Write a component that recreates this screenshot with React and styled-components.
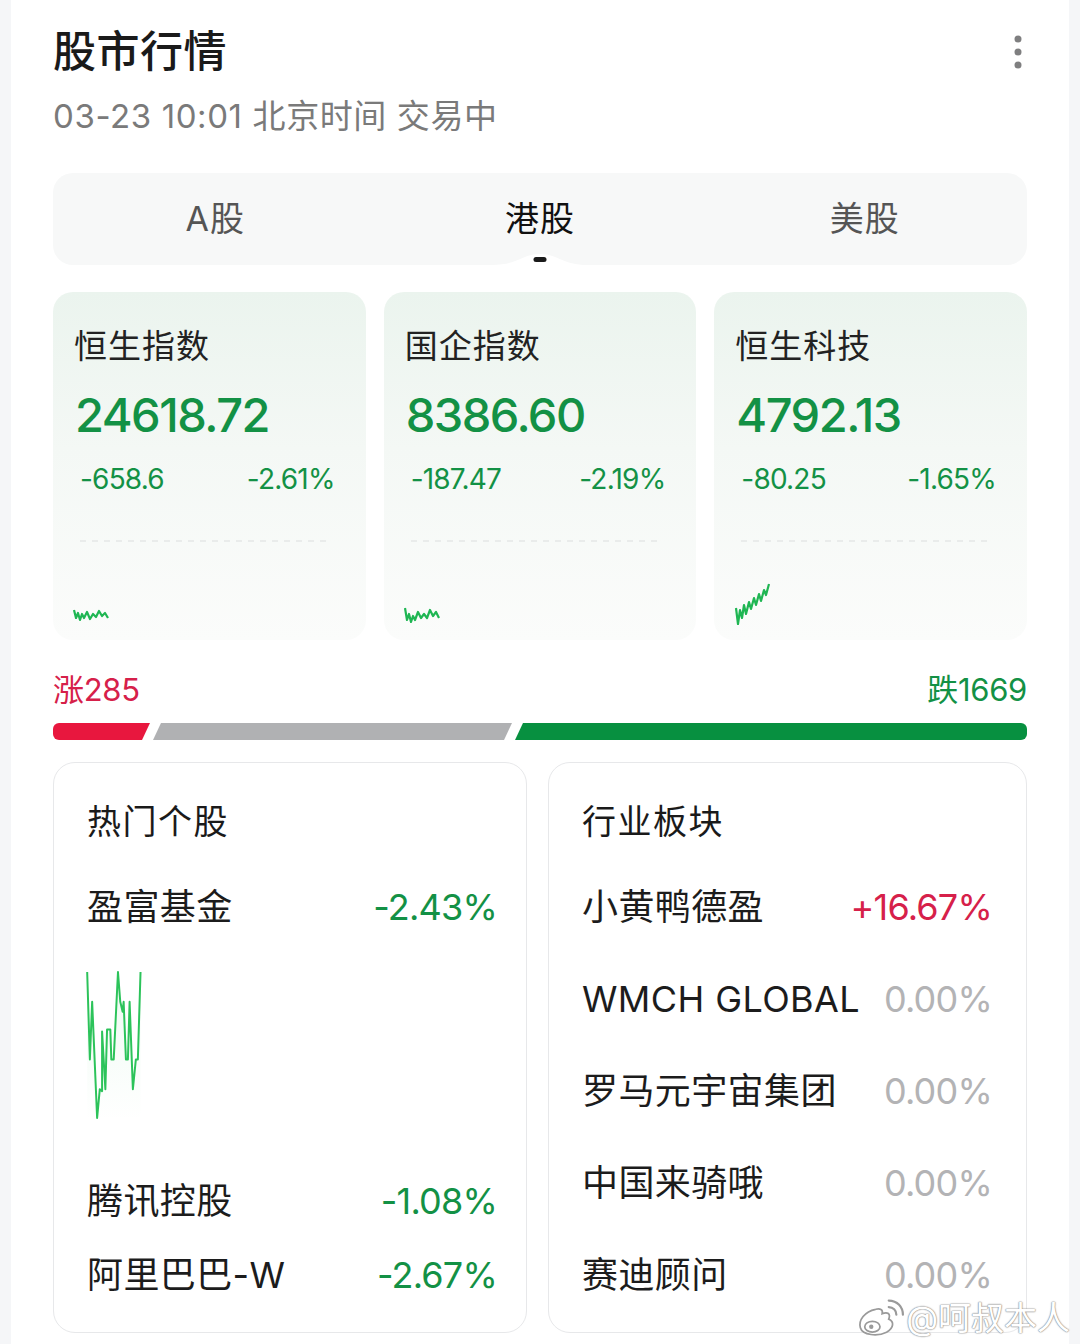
import React from 'react';
import styled, { createGlobalStyle } from 'styled-components';

const Global = createGlobalStyle`
  html, body { margin: 0; padding: 0; background: #f5f6f8; }
  body { font-family: Inter, "Noto Sans CJK SC", sans-serif; -webkit-font-smoothing: antialiased; }
`;

const GREEN = '#139145';
const RED = '#d6204a';
const GREY = '#b3b3b5';

const Page = styled.div`
  width: 1080px;
  height: 1344px;
  background: #f5f6f8;
  display: flex;
  justify-content: center;
  overflow: hidden;
  position: relative;
`;

const Panel = styled.main`
  width: 1058px;
  background: #ffffff;
  padding: 25px 42px 0;
  box-sizing: border-box;
  display: flex;
  flex-direction: column;
`;

const Header = styled.header`
  display: flex;
  justify-content: space-between;
  align-items: flex-start;
`;

const Title = styled.h1`
  margin: 0;
  font-size: 43px;
  line-height: 52px;
  font-weight: 500;
  color: #1a1a1a;
  letter-spacing: 0.5px;
`;

const Subtitle = styled.div`
  margin-top: 17px;
  font-size: 33px;
  line-height: 44px;
  color: #7a7a7a;
  letter-spacing: 0.6px;
`;

const MoreIcon = styled.svg`
  margin: 10px 4px 0 0;
  display: block;
`;

const TabBar = styled.nav`
  position: relative;
  margin-top: 35px;
  height: 92px;
  background: #f7f8f8;
  border-radius: 20px;
  display: grid;
  grid-template-columns: repeat(3, 1fr);
  align-items: center;
`;

const Tab = styled.div`
  text-align: center;
  font-size: 34px;
  line-height: 44px;
  color: ${p => (p.$active ? '#111111' : '#555555')};
  font-weight: 400;
  letter-spacing: 1px;
`;

const TabNotch = styled.svg`
  position: absolute;
  left: 50%;
  bottom: 0;
  transform: translateX(-50%);
  display: block;
`;

const IndexGrid = styled.section`
  margin-top: 27px;
  display: grid;
  grid-template-columns: repeat(3, 1fr);
  gap: 18px;
`;

const IndexCard = styled.div`
  height: 348px;
  box-sizing: border-box;
  border-radius: 20px;
  background: linear-gradient(180deg, #ebf4ee 0%, #f4f8f5 45%, #fbfcfb 100%);
  padding-top: 32px;
  display: flex;
  flex-direction: column;
`;

const IndexName = styled.div`
  padding-left: 21px;
  font-size: 33px;
  line-height: 44px;
  color: #222222;
  letter-spacing: 1px;
`;

const IndexValue = styled.div`
  margin-top: 19px;
  padding-left: 22px;
  font-size: 47px;
  line-height: 56px;
  font-weight: 500;
  color: ${GREEN};
  letter-spacing: -1.5px;
`;

const ChangeRow = styled.div`
  margin-top: 18px;
  padding: 0 31px 0 27px;
  display: flex;
  justify-content: space-between;
  font-size: 28px;
  line-height: 36px;
  color: ${GREEN};
  letter-spacing: -0.8px;
`;

const Chart = styled.svg`
  display: block;
  margin: 13px 0 0 20px;
`;

const BreadthRow = styled.div`
  margin-top: 30px;
  display: flex;
  justify-content: space-between;
  font-size: 31px;
  line-height: 40px;
  letter-spacing: -0.3px;
`;

const BreadthLabel = styled.span`
  color: ${p => p.$color};
`;

const Bar = styled.div`
  margin-top: 13px;
  height: 17px;
  display: flex;
`;

const Segment = styled.div`
  flex: ${p => p.$grow} 0 0;
  background: ${p => p.$color};
  margin-left: ${p => (p.$first ? '0' : '3px')};
  border-radius: ${p => (p.$first ? '6px 0 0 6px' : p.$last ? '0 6px 6px 0' : '0')};
  clip-path: ${p =>
    p.$first
      ? 'polygon(0 0, 100% 0, calc(100% - 8px) 100%, 0 100%)'
      : p.$last
      ? 'polygon(8px 0, 100% 0, 100% 100%, 0 100%)'
      : 'polygon(8px 0, 100% 0, calc(100% - 8px) 100%, 0 100%)'};
`;

const ListGrid = styled.section`
  margin-top: 22px;
  display: grid;
  grid-template-columns: 474px 1fr;
  gap: 21px;
`;

const ListCard = styled.div`
  height: 571px;
  box-sizing: border-box;
  border: 1.5px solid #e7e8ea;
  border-radius: 22px;
  background: #ffffff;
  padding: 36px ${p => p.$padRight}px 34px 33px;
  display: flex;
  flex-direction: column;
`;

const CardTitle = styled.div`
  font-size: 34px;
  line-height: 46px;
  color: #1a1a1a;
  font-weight: 400;
  letter-spacing: 1.5px;
`;

const Row = styled.div`
  margin-top: ${p => p.$mt}px;
  display: flex;
  justify-content: space-between;
  align-items: center;
  font-size: 36px;
  line-height: 46px;
`;

const RowName = styled.span`
  color: #1c1c1c;
  letter-spacing: 0.4px;
  white-space: nowrap;
`;

const RowValue = styled.span`
  color: ${p => p.$color};
  letter-spacing: -0.8px;
  white-space: nowrap;
`;

const StockSpark = styled.svg`
  display: block;
  margin: 40px 0 0 -2px;
`;

const Watermark = styled.div`
  position: absolute;
  right: 10px;
  bottom: 6px;
  display: flex;
  align-items: center;
  gap: 2px;
  font-size: 33px;
  line-height: 40px;
  color: #ffffff;
  text-shadow: 0 0 1px #8c8c8c, 0 0 1px #8c8c8c, 0 0 2px #a0a0a0;
`;

const indices = [
  {
    name: '恒生指数',
    value: '24618.72',
    change: '-658.6',
    pct: '-2.61%',
    spark: '1,100 3,108 5,103 7,110 9,104 11,108 14,102 17,109 20,104 23,107 26,101 29,106 32,103 35,108',
  },
  {
    name: '国企指数',
    value: '8386.60',
    change: '-187.47',
    pct: '-2.19%',
    spark: '1,98 3,110 5,104 7,112 9,106 11,110 14,102 17,108 20,104 23,108 26,100 29,106 32,102 35,108',
  },
  {
    name: '恒生科技',
    value: '4792.13',
    change: '-80.25',
    pct: '-1.65%',
    spark: '2,98 4,114 6,100 8,108 10,95 12,104 15,92 17,99 20,88 22,95 25,84 27,91 30,80 32,85 35,74',
  },
];

const stockSpark =
  '2,2 4.7,90 7,32 12,149 14.7,120 17,122 17,62 20.3,120 22,60 25.3,60 26.3,90 28.7,90 33,2 35.3,32 37.7,42 38.7,32 41,90 43,90 44.7,32 48,120 51,90 53,90 55.7,2';

export default function App() {
  return (
    <Page>
      <Global />
      <Panel>
        <Header>
          <div>
            <Title>股市行情</Title>
            <Subtitle>03-23 10:01 北京时间 交易中</Subtitle>
          </div>
          <MoreIcon width="10" height="36" viewBox="0 0 10 36">
            <circle cx="5" cy="4" r="3.5" fill="#7f7f80" />
            <circle cx="5" cy="17" r="3.5" fill="#7f7f80" />
            <circle cx="5" cy="30" r="3.5" fill="#7f7f80" />
          </MoreIcon>
        </Header>

        <TabBar>
          <Tab>A股</Tab>
          <Tab $active>港股</Tab>
          <Tab>美股</Tab>
          <TabNotch width="96" height="14" viewBox="0 0 96 14">
            <path d="M0 14 C 26 14, 30 3, 48 3 C 66 3, 70 14, 96 14 Z" fill="#ffffff" />
            <rect x="41.5" y="6" width="13" height="5" rx="2.5" fill="#1a1a1a" />
          </TabNotch>
        </TabBar>

        <IndexGrid>
          {indices.map(ix => (
            <IndexCard key={ix.name}>
              <IndexName>{ix.name}</IndexName>
              <IndexValue>{ix.value}</IndexValue>
              <ChangeRow>
                <span>{ix.change}</span>
                <span>{ix.pct}</span>
              </ChangeRow>
              <Chart width="273" height="120" viewBox="0 0 273 120">
                <line x1="7" y1="31" x2="259" y2="31" stroke="#dcdedd" strokeWidth="1.2" strokeDasharray="6 6" />
                <polyline points={ix.spark} fill="none" stroke="#1fb653" strokeWidth="2.2" strokeLinejoin="round" />
              </Chart>
            </IndexCard>
          ))}
        </IndexGrid>

        <BreadthRow>
          <BreadthLabel $color={RED}>涨285</BreadthLabel>
          <BreadthLabel $color={GREEN}>跌1669</BreadthLabel>
        </BreadthRow>
        <Bar>
          <Segment $first $grow={97} $color="#e8173e" />
          <Segment $grow={359} $color="#b0b1b3" />
          <Segment $last $grow={512} $color="#079040" />
        </Bar>

        <ListGrid>
          <ListCard $padRight={29}>
            <CardTitle>热门个股</CardTitle>
            <Row $mt={39}>
              <RowName>盈富基金</RowName>
              <RowValue $color={GREEN}>-2.43%</RowValue>
            </Row>
            <StockSpark width="60" height="152" viewBox="0 0 60 152">
              <defs>
                <linearGradient id="sparkFill" x1="0" y1="0" x2="0" y2="1">
                  <stop offset="0" stopColor="#2cc35a" stopOpacity="0.08" />
                  <stop offset="1" stopColor="#2cc35a" stopOpacity="0" />
                </linearGradient>
              </defs>
              <polygon points={`${stockSpark} 55.7,152 2,152`} fill="url(#sparkFill)" />
              <polyline points={stockSpark} fill="none" stroke="#2cc35a" strokeWidth="2" strokeLinejoin="round" />
            </StockSpark>
            <Row $mt={57}>
              <RowName>腾讯控股</RowName>
              <RowValue $color={GREEN}>-1.08%</RowValue>
            </Row>
            <Row $mt={28}>
              <RowName>阿里巴巴-W</RowName>
              <RowValue $color={GREEN}>-2.67%</RowValue>
            </Row>
          </ListCard>

          <ListCard $padRight={34}>
            <CardTitle>行业板块</CardTitle>
            <Row $mt={39}>
              <RowName>小黄鸭德盈</RowName>
              <RowValue $color={RED}>+16.67%</RowValue>
            </Row>
            <Row $mt={46}>
              <RowName>WMCH GLOBAL</RowName>
              <RowValue $color={GREY}>0.00%</RowValue>
            </Row>
            <Row $mt={46}>
              <RowName>罗马元宇宙集团</RowName>
              <RowValue $color={GREY}>0.00%</RowValue>
            </Row>
            <Row $mt={46}>
              <RowName>中国来骑哦</RowName>
              <RowValue $color={GREY}>0.00%</RowValue>
            </Row>
            <Row $mt={46}>
              <RowName>赛迪顾问</RowName>
              <RowValue $color={GREY}>0.00%</RowValue>
            </Row>
          </ListCard>
        </ListGrid>
      </Panel>

      <Watermark>
        <svg width="48" height="40" viewBox="0 0 44 36">
          <path d="M18 10 C 8 12, 2 20, 4 27 C 6 34, 20 35, 28 31 C 35 27, 35 21, 30 19 C 32 14, 29 12, 24 14 C 25 10, 22 9, 18 10 Z" fill="#ffffff" stroke="#9a9a9a" strokeWidth="1.6" />
          <ellipse cx="15" cy="26" rx="7" ry="5" fill="#ffffff" stroke="#9a9a9a" strokeWidth="1.6" />
          <circle cx="14" cy="26" r="2" fill="#9a9a9a" />
          <path d="M30 8 C 34 8, 37 11, 37 15" fill="none" stroke="#9a9a9a" strokeWidth="2" strokeLinecap="round" />
          <path d="M30 2 C 38 2, 43 8, 43 15" fill="none" stroke="#9a9a9a" strokeWidth="2" strokeLinecap="round" />
        </svg>
        <span>@呵叔本人</span>
      </Watermark>
    </Page>
  );
}
